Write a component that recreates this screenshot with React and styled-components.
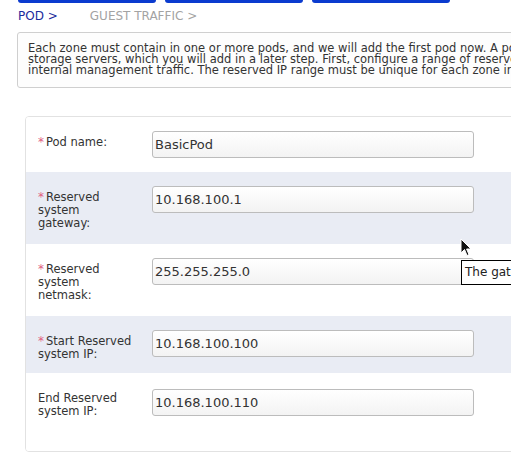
import React from 'react';
import styled, { createGlobalStyle } from 'styled-components';

const GlobalStyle = createGlobalStyle`
  html, body {
    margin: 0;
    padding: 0;
    background: #ffffff;
    overflow: hidden;
  }
  body {
    font-family: "DejaVu Sans", "Liberation Sans", sans-serif;
    color: #333;
  }
`;

const Page = styled.div`
  position: relative;
  width: 511px;
  height: 453px;
  overflow: hidden;
`;

const TabStrip = styled.div`
  display: flex;
  gap: 9px;
  padding-left: 18px;
  height: 3px;
`;

const Tab = styled.div`
  width: 138px;
  height: 3px;
  background: #0b3bcf;
  border-radius: 0 0 4px 4px;
`;

const Breadcrumbs = styled.div`
  display: flex;
  gap: 32px;
  padding: 6px 0 0 18px;
  height: 23px;
  font-size: 12px;
  line-height: 14px;
`;

const Crumb = styled.span`
  color: ${(p) => (p.$active ? '#1c2a9c' : '#a3a3a3')};
`;

const Description = styled.div`
  margin-left: 17px;
  width: 680px;
  box-sizing: border-box;
  height: 56px;
  padding: 10px 10px;
  border: 1px solid #cfcfcf;
  border-radius: 3px 0 0 3px;
  background: #fdfdfd;
  font-size: 11.5px;
  line-height: 11px;
  color: #333;
  white-space: nowrap;
`;

const FormBox = styled.div`
  margin: 28px 0 0 25px;
  width: 600px;
  border: 1px solid #e2e2e2;
  border-radius: 4px 0 0 4px;
  background: #fff;
  overflow: hidden;
`;

const Row = styled.div`
  display: flex;
  align-items: flex-start;
  gap: 17px;
  padding: ${(p) => p.$pad || '14px 0 14px 12px'};
  background: ${(p) => (p.$shaded ? '#e9ecf4' : '#ffffff')};
`;

const Label = styled.label`
  width: 97px;
  flex-shrink: 0;
  padding-top: ${(p) => p.$top || 5}px;
  font-size: 11.5px;
  line-height: 13px;
  color: #333;
`;

const Required = styled.span`
  color: #e0607e;
  font-size: 12px;
  margin-right: 2px;
`;

const Input = styled.input`
  width: 322px;
  height: 27px;
  box-sizing: border-box;
  padding: 0 2px;
  border: 1px solid #bcbcbc;
  border-radius: 3px;
  background: linear-gradient(#ffffff, #f3f3f3);
  font-family: "DejaVu Sans", "Liberation Sans", sans-serif;
  font-size: 13px;
  color: #333;
  outline: none;
`;

const Tooltip = styled.div`
  position: absolute;
  left: 461px;
  top: 260px;
  height: 25px;
  box-sizing: border-box;
  padding: 3px 3px;
  border: 1px solid #000;
  background: #fff;
  font-size: 12px;
  line-height: 17px;
  color: #222;
  white-space: nowrap;
`;

const Cursor = styled.svg`
  position: absolute;
  left: 460px;
  top: 238px;
`;

const fields = [
  { label: 'Pod name:', value: 'BasicPod', required: true },
  { label: 'Reserved system gateway:', value: '10.168.100.1', required: true, shaded: true },
  { label: 'Reserved system netmask:', value: '255.255.255.0', required: true },
  { label: 'Start Reserved system IP:', value: '10.168.100.100', required: true, shaded: true, pad: '14px 0 12px 12px' },
  { label: 'End Reserved system IP:', value: '10.168.100.110', pad: '16px 0 33px 12px', top: 3 },
];

const App = () => {
  return (
    <Page>
      <GlobalStyle />
      <TabStrip>
        <Tab />
        <Tab />
        <Tab />
      </TabStrip>
      <Breadcrumbs>
        <Crumb $active>POD &gt;</Crumb>
        <Crumb>GUEST TRAFFIC &gt;</Crumb>
      </Breadcrumbs>
      <Description>
        Each zone must contain in one or more pods, and we will add the first pod now. A pod contains hosts and primary
        <br />
        storage servers, which you will add in a later step. First, configure a range of reserved IP addresses for CloudStack's
        <br />
        internal management traffic. The reserved IP range must be unique for each zone in the cloud.
      </Description>
      <FormBox>
        {fields.map((f) => (
          <Row key={f.label} $shaded={f.shaded} $pad={f.pad}>
            <Label $top={f.top}>
              {f.required && <Required>*</Required>}
              {f.label}
            </Label>
            <Input defaultValue={f.value} />
          </Row>
        ))}
      </FormBox>
      <Cursor width="12" height="19" viewBox="0 0 12 19">
        <path d="M1 1 L1 15 L4.5 11.5 L7 17.5 L9 16.6 L6.6 11 L11 11 Z" fill="#111" stroke="#fff" strokeWidth="1" />
      </Cursor>
      <Tooltip>The gateway in use for these IP addresses</Tooltip>
    </Page>
  );
};

export default App;
